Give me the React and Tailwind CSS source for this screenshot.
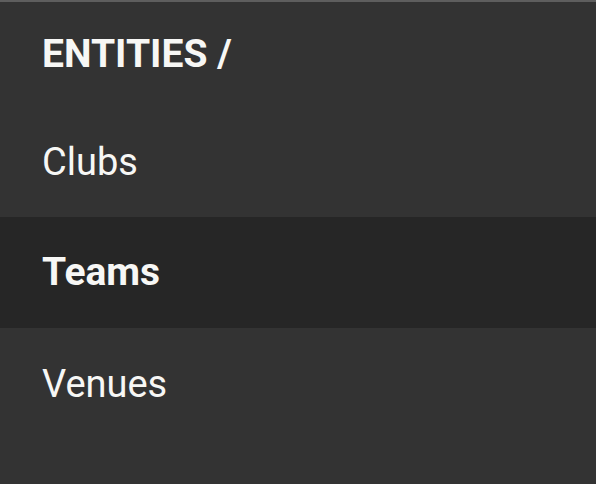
import React from "react";

const items = [
  { label: "Clubs", active: false },
  { label: "Teams", active: true },
  { label: "Venues", active: false },
];

const App = () => {
  return (
    <div
      className="w-[596px] h-[484px] bg-[#333333] border-t-2 border-[#5e5e5e] text-[#f7f7f5] overflow-hidden"
      style={{ fontFamily: "Roboto, 'Noto Sans', sans-serif" }}
    >
      <div className="h-[104px] flex items-center pl-[42px]">
        <span className="text-[39px] font-bold leading-none">ENTITIES /</span>
      </div>
      <ul className="flex flex-col">
        {items.map((item) => (
          <li
            key={item.label}
            className={
              item.active
                ? "h-[111px] flex items-center pl-[42px] bg-[#262626]"
                : "h-[111px] flex items-center pl-[42px]"
            }
          >
            {item.active ? (
              <span className="text-[39px] font-bold leading-none">{item.label}</span>
            ) : (
              <span className="text-[38px] leading-none">{item.label}</span>
            )}
          </li>
        ))}
      </ul>
    </div>
  );
};

export default App;
